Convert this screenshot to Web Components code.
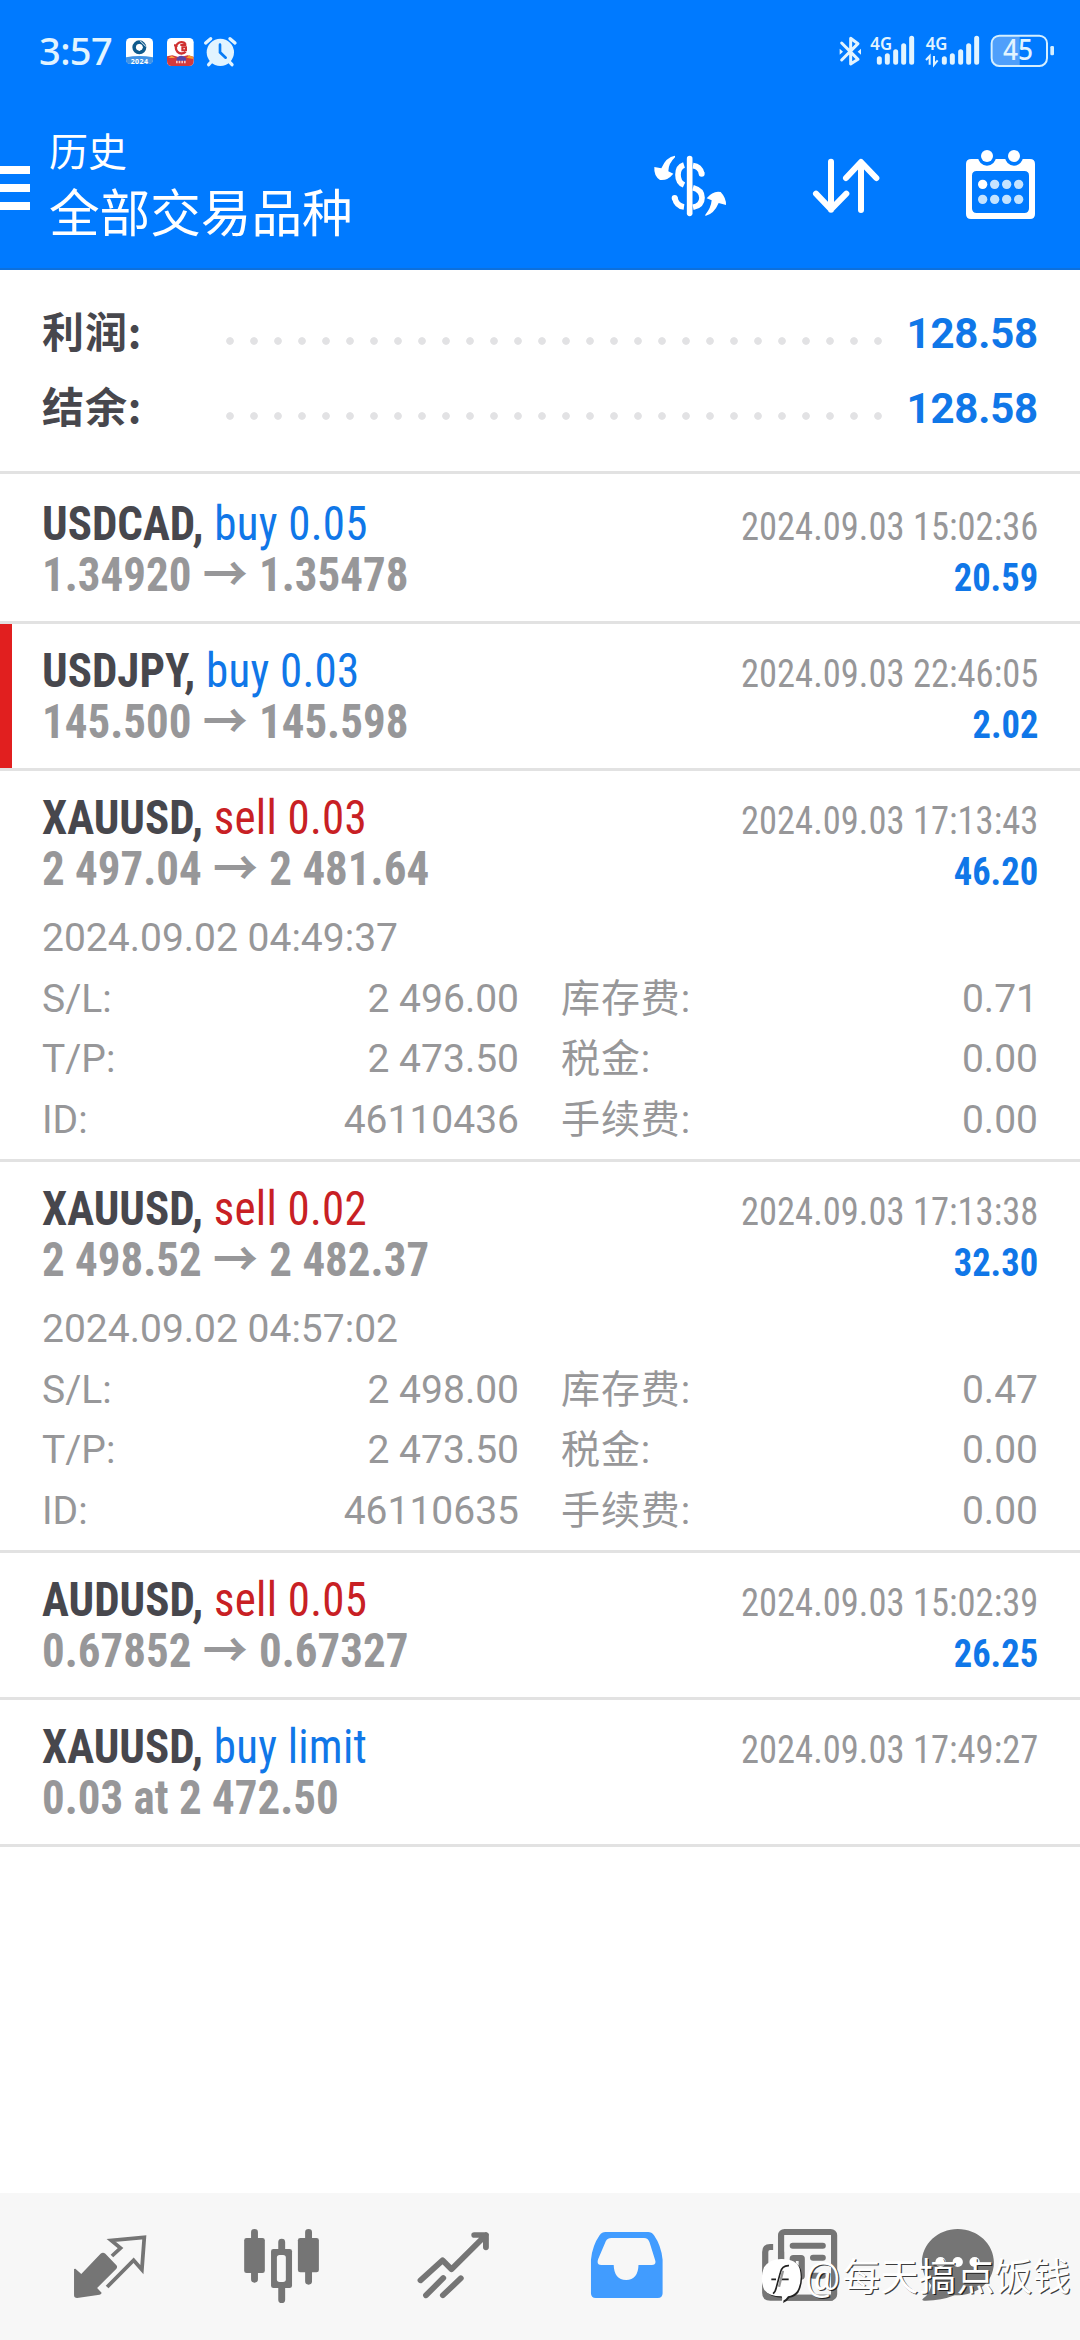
<!DOCTYPE html>
<html lang="zh-CN">
<head>
<meta charset="utf-8">
<title>历史</title>
<style>
html,body{margin:0;padding:0;background:#fff}
body{width:1080px;height:2340px;overflow:hidden;font-family:Roboto,"Noto Sans CJK SC",sans-serif}
</style>
</head>
<body>
<history-app></history-app>
<script>
const define = (name, css, html) => customElements.define(name, class extends HTMLElement {
  connectedCallback() {
    if (this.shadowRoot) return;
    const root = this.attachShadow({ mode: 'open' });
    const body = typeof html === 'function' ? html(this) : html;
    root.innerHTML = `<style>*{box-sizing:border-box}svg{display:block;flex:none}${css}</style>${body}`;
  }
});

define('status-bar', `
:host{display:flex;height:101px;padding:0 20px 0 39px;color:#e2f4ff;background:#007aff}
.time{width:81px;padding-top:22px;font:500 38px/56px "Noto Sans",sans-serif;letter-spacing:-.6px;white-space:nowrap}
.gap{flex:1}
.apps{margin-top:30px}.sys{margin-top:10px}
text{font-family:"Noto Sans",sans-serif;fill:#e2f4ff}`, `
<div class="time">3:57</div>
<svg class="apps" width="120" height="45" viewBox="0 0 360 135">
  <rect x="18" y="24" width="81" height="78" rx="13" fill="#fff"/>
  <path d="M18 82Q58 74 99 82V89Q99 102 86 102H31Q18 102 18 89Z" fill="#4293e4"/>
  <circle cx="58" cy="52" r="15.5" fill="none" stroke="#105a8b" stroke-width="11"/>
  <path d="M58 41 69 52 58 63 47 52Z" fill="#fff"/><path d="M60 32 78 50" stroke="#fff" stroke-width="3"/>
  <text x="58" y="102" font-size="21" font-weight="700" text-anchor="middle" textLength="52" style="fill:#fff">2024</text>
  <rect x="141" y="24" width="80" height="84" rx="13" fill="#fff"/>
  <path d="M141 79 157 76 178 82 203 76 221 80V93Q221 108 207 108H155Q141 108 141 93Z" fill="#d33a3c"/>
  <path d="M145 84 155 77 166 84Z" fill="#f8a13c"/><path d="M170 84Q183 71 198 84V93H170Z" fill="#5b46a5"/><path d="M199 83 208 76 219 81V87Z" fill="#f59d2d"/>
  <path d="M168 96H199" stroke="#f6c6c6" stroke-width="8" stroke-dasharray="5 3"/>
  <path d="M162 46H174M197 42A17 17 0 1 0 197 65" fill="none" stroke="#cf3030" stroke-width="7"/>
  <path d="M181 45H199M198 52H187V61H198Z" fill="none" stroke="#cf3030" stroke-width="6"/>
  <circle cx="301" cy="67" r="41" fill="#e2f4ff"/>
  <path d="M257 39 272 26M345 39 330 26" stroke="#e2f4ff" stroke-width="10" stroke-linecap="round"/>
  <path d="M276 93 266 104M326 93 336 104" stroke="#e2f4ff" stroke-width="10" stroke-linecap="round"/>
  <path d="M300 44V67L317 83" fill="none" stroke="#087cf5" stroke-width="8" stroke-linecap="round"/>
</svg>
<span class="gap"></span>
<svg class="sys" width="230" height="80" viewBox="90 0 690 240">
  <path d="M125 99 174 148 152 162V85L174 101 125 150" fill="none" stroke="#e2f4ff" stroke-width="9" stroke-linejoin="round" stroke-linecap="round"/>
  <path d="M119 116 129 125 119 134ZM183 116 173 125 183 134Z" fill="#e2f4ff"/>
  <text x="211" y="121" font-size="56" font-weight="600" textLength="65" lengthAdjust="spacingAndGlyphs">4G</text>
  <g stroke="#e2f4ff" stroke-width="15" stroke-linecap="round">
    <path d="M238 146V157M262 137V157M287 125V157M311 107V157M335 85V157"/>
    <path d="M433 146V157M457 137V157M482 125V157M506 107V157M530 85V157"/>
  </g>
  <text x="377" y="121" font-size="56" font-weight="600" textLength="65" lengthAdjust="spacingAndGlyphs">4G</text>
  <path d="M378 150 389 138V164M402 138V164L413 151" fill="none" stroke="#e2f4ff" stroke-width="6"/>
  <path d="M588 79H659V165H588Q577 160 577 148V96Q577 83 588 79Z" fill="#4f9ffb"/>
  <rect x="575" y="77" width="166" height="91" rx="23" fill="none" stroke="#d5efff" stroke-width="6"/>
  <rect x="751" y="108" width="11" height="28" rx="4" fill="#d5efff"/>
  <text x="609" y="151" font-size="84" font-weight="500" textLength="90" lengthAdjust="spacingAndGlyphs">45</text>
</svg>`);

define('app-header', `
:host{display:flex;height:169px;background:#007aff;color:#fff;border-bottom:2px solid #0d70dc}
.menu{display:flex;flex-direction:column;gap:10px;padding-top:65px;width:30px}
.menu i{height:8px;background:#fff}
.titles{margin-left:19px;padding-top:24px;width:571px;white-space:nowrap}
.small{font-size:39px;line-height:56px}.big{font-size:50.6px;line-height:68px}
svg{margin-top:19px}`, `
<div class="menu"><i></i><i></i><i></i></div>
<div class="titles"><div class="small"><slot name="title"></slot></div><div class="big"><slot name="scope"></slot></div></div>
<svg width="160" height="148" viewBox="0 0 480 444">
  <path d="M165 107Q138 111 124 145L103 141Q101 168 120 180Q142 183 160 161L145 154Q145 131 165 112Z" fill="#fff"/>
  <path d="M256 288Q282 282 296 249L318 255Q319 234 302 216Q279 211 260 235L275 241Q273 264 256 284Z" fill="#fff"/>
  <path d="M209 116V280" stroke="#fff" stroke-width="17" stroke-linecap="round"/>
  <path d="M192 135Q174 141 174 164Q174 187 192 195M219 137Q240 140 245 160M219 203Q246 210 246 233Q246 256 219 262M164 233Q169 258 192 261" fill="none" stroke="#fff" stroke-width="17"/>
  <circle cx="245" cy="161" r="9" fill="#fff"/><circle cx="164" cy="234" r="9" fill="#fff"/>
</svg>
<svg width="140" height="148" viewBox="480 0 420 444">
  <path d="M633 125V269M588 221 633 268 679 221M723 270V127M678 174 723 126 769 174" fill="none" stroke="#fff" stroke-width="18" stroke-linecap="round" stroke-linejoin="round"/>
</svg>
<svg width="160" height="148" viewBox="900 0 480 444">
  <path fill-rule="evenodd" fill="#fff" d="M1054 117H1230Q1245 117 1245 132V282Q1245 297 1230 297H1053Q1038 297 1038 282V132Q1038 117 1054 117ZM1070 153Q1056 153 1056 167V265Q1056 279 1070 279H1213Q1227 279 1227 265V167Q1227 153 1213 153Z"/>
  <path d="M1101 108V110M1182 108V110" stroke="#007aff" stroke-width="54" stroke-linecap="round"/>
  <circle cx="1101" cy="108" r="18" fill="#fff"/><circle cx="1182" cy="108" r="18" fill="#fff"/>
  <circle cx="1088" cy="193" r="14" fill="#fff"/>
  <g fill="#c4e3ff"><circle cx="1124" cy="193" r="14"/><circle cx="1160" cy="193" r="14"/><circle cx="1196" cy="193" r="14"/><circle cx="1088" cy="238" r="14"/><circle cx="1124" cy="238" r="14"/><circle cx="1160" cy="238" r="14"/><circle cx="1196" cy="238" r="14"/></g>
</svg>`);

define('summary-panel', `:host{display:block;height:204px;padding-top:26px;border-bottom:3px solid #e2e2e2}`, `<slot></slot>`);

define('summary-row', `
:host{display:flex;height:75px;padding:0 42px;font-weight:700;font-size:42px;line-height:75px;white-space:nowrap}
.label{width:176px;color:#47474d;font-family:"Noto Sans CJK SC",sans-serif;line-height:67px;letter-spacing:.9px}
.dots{width:672px;height:24px;margin-top:33px;background:radial-gradient(circle,#e2e2e4 3.4px,transparent 4.2px) 0 0/24px 24px}
.value{flex:1;text-align:right;color:#1077e8;letter-spacing:-.2px}`,
  el => `<span class="label">${el.getAttribute('label')}</span><span class="dots"></span><span class="value"><slot></slot></span>`);

define('deal-row', `
:host{display:block;height:147px;padding:21px 42px 0;border-bottom:3px solid #e2e2e2;color:#979799;white-space:nowrap}
:host([first]){height:150px;padding-top:24px}
:host([mark]){box-shadow:inset 12px 0 #e11f1f}
:host([details]){height:391px}
.line{display:flex;height:51px;align-items:baseline;justify-content:space-between;font-size:48px;line-height:51px;font-stretch:75%}
.left,.right{display:block;transform:scaleX(.937);transform-origin:0 0}
.right{transform-origin:100% 0;font-size:39px}
.sym{color:#47474d}
.side{margin-left:11.5px;letter-spacing:.25px;font-weight:430}
.buy{color:#1077e8}.sell{color:#c82024}
.profit{font-weight:700;color:#1077e8}
.arrow{font-family:Roboto,"Noto Sans CJK SC",sans-serif;font-weight:700;margin:0 12px}
.details{margin-top:14px;font-size:39px;line-height:60.6px}
.grid{display:grid;grid-template-columns:477px 477px;column-gap:42px}
.cell{display:flex;justify-content:space-between;height:60.6px}
.cjk{letter-spacing:.9px}`, el => {
  const a = n => el.getAttribute(n);
  const price = a('to') ? `<b>${a('price')}</b><span class="arrow">→</span><b>${a('to')}</b>` : `<b>${a('price')}</b>`;
  const cell = (k, v, c = '') => `<div class="cell"><span class="${c}">${k}</span><span>${v}</span></div>`;
  let details = '';
  if (a('details')) {
    const [opened, sl, tp, id, swap] = a('details').split('|');
    details = `<div class="details"><div>${opened}</div><div class="grid">${cell('S/L:', sl)}${cell('库存费:', swap, 'cjk')}${cell('T/P:', tp)}${cell('税金:', '0.00', 'cjk')}${cell('ID:', id)}${cell('手续费:', '0.00', 'cjk')}</div></div>`;
  }
  return `<div class="line"><span class="left"><b class="sym">${a('symbol')},</b><span class="side ${a('side').split(' ')[0]}">${a('side')}</span></span><span class="right">${a('time')}</span></div>
<div class="line"><span class="left">${price}</span><span class="right profit">${a('profit') || ''}</span></div>${details}`;
});

define('tab-bar', `:host{display:flex;height:147px;background:#f7f7f7}`, () => {
  const cell = (x, s) => `<svg width="180" height="147" preserveAspectRatio="none" viewBox="${x} 39 522.67 441">${s}</svg>`;
  const c = '#757575';
  return cell(0, `<path d="M292 221Q299 216 306 221L338 256Q342 261 338 266L282 324 295 338Q295 343 289 344L224 354Q215 354 215 346V267L219 266 236 282Z" fill="${c}"/>
<path d="M325 228 350 204 323 181 419 172 412 269 388 241 311 321" fill="none" stroke="${c}" stroke-width="11"/>`)
  + cell(522.67, `<path d="M739 157V298M896 157V304M818 186V359" stroke="${c}" stroke-width="20" stroke-linecap="round"/>
<rect x="709" y="174" width="60" height="105" rx="7" fill="${c}"/><rect x="865" y="174" width="61" height="103" rx="7" fill="${c}"/><rect x="787" y="207" width="61" height="117" rx="7" fill="${c}"/><rect x="804" y="225" width="26" height="81" rx="8" fill="#f7f7f7"/>`)
  + cell(1045.33, `<path d="M1221 301 1285 241 1311 268 1411 165M1377 165H1411V202M1237 346 1287 294M1286 346 1338 295" fill="none" stroke="${c}" stroke-width="17" stroke-linecap="round" stroke-linejoin="round"/>`)
  + cell(0, `<path fill-rule="evenodd" fill="#419cff" d="M190 156H314Q324 156 331 166Q352 197 356 239V340Q356 354 342 354H162Q148 354 148 340V239Q152 197 173 166Q180 156 190 156ZM207 174Q196 174 191 184L169 237Q163 255 178 255H214Q215 299 250 300Q285 299 286 255H325Q339 255 334 239L318 187Q314 174 302 174Z"/>`)
  + cell(522.67, `<g fill="none" stroke="${c}" stroke-width="18"><rect x="700" y="156" width="154" height="197" rx="10"/><path d="M677 201H668Q654 201 654 216V338Q654 353 669 353H850M700 215V353"/><path d="M734 197H821M793 233H821M793 287H821" stroke-linecap="round"/><rect x="734" y="234" width="26" height="56" rx="2"/></g>`)
  + cell(1045.33, `<path d="M1213 147C1271 147 1318 192 1318 247C1318 305 1272 347 1204 346Q1163 363 1115 362Q1105 361 1115 353Q1132 341 1136 315Q1109 287 1109 247C1109 192 1155 147 1213 147Z" fill="${c}"/><g fill="#fff"><circle cx="1163" cy="246" r="15"/><circle cx="1213" cy="246" r="15"/><circle cx="1262" cy="246" r="15"/></g>`);
});

define('author-mark', `
:host{position:absolute;left:760px;top:2254px;display:flex;color:#fff;font-size:38px;line-height:46px;white-space:nowrap;text-shadow:1.2px 1.2px 0 rgba(0,0,0,.75)}
.at{font-size:39px;letter-spacing:2.5px;margin-left:1px}svg{margin-top:4px}`, `
<svg width="44" height="48" viewBox="0 0 132 144">
  <path d="M12 28Q30 2 66 3Q110 4 119 32Q128 70 111 100Q100 113 84 115Q78 126 65 131Q68 122 65 115Q27 115 13 96Q-2 64 12 28Z" fill="#222" transform="translate(4 4)"/>
  <path d="M12 28Q30 2 66 3Q110 4 119 32Q128 70 111 100Q100 113 84 115Q78 126 65 131Q68 122 65 115Q27 115 13 96Q-2 64 12 28Z" fill="#fff"/>
  <path d="M87 23Q66 22 61 44L49 88Q46 102 39 107M34 64H48M62 64H86" fill="none" stroke="#222" stroke-width="5"/>
  <path d="M69 38 57 86" stroke="#999" stroke-width="7"/>
</svg><span class="at">@</span><span><slot></slot></span>`);

define('history-app', `
:host{display:flex;flex-direction:column;position:relative;width:1080px;height:2340px;background:#fff}
.list{flex:1}`, `
<status-bar></status-bar>
<app-header><span slot="title">历史</span><span slot="scope">全部交易品种</span></app-header>
<summary-panel><summary-row label="利润:">128.58</summary-row><summary-row label="结余:">128.58</summary-row></summary-panel>
<div class="list">
<deal-row first symbol="USDCAD" side="buy 0.05" time="2024.09.03 15:02:36" price="1.34920" to="1.35478" profit="20.59"></deal-row>
<deal-row mark symbol="USDJPY" side="buy 0.03" time="2024.09.03 22:46:05" price="145.500" to="145.598" profit="2.02"></deal-row>
<deal-row symbol="XAUUSD" side="sell 0.03" time="2024.09.03 17:13:43" price="2 497.04" to="2 481.64" profit="46.20" details="2024.09.02 04:49:37|2 496.00|2 473.50|46110436|0.71"></deal-row>
<deal-row symbol="XAUUSD" side="sell 0.02" time="2024.09.03 17:13:38" price="2 498.52" to="2 482.37" profit="32.30" details="2024.09.02 04:57:02|2 498.00|2 473.50|46110635|0.47"></deal-row>
<deal-row symbol="AUDUSD" side="sell 0.05" time="2024.09.03 15:02:39" price="0.67852" to="0.67327" profit="26.25"></deal-row>
<deal-row symbol="XAUUSD" side="buy limit" time="2024.09.03 17:49:27" price="0.03 at 2 472.50"></deal-row>
</div>
<tab-bar></tab-bar>
<author-mark>每天搞点饭钱</author-mark>`);
</script>
</body>
</html>
